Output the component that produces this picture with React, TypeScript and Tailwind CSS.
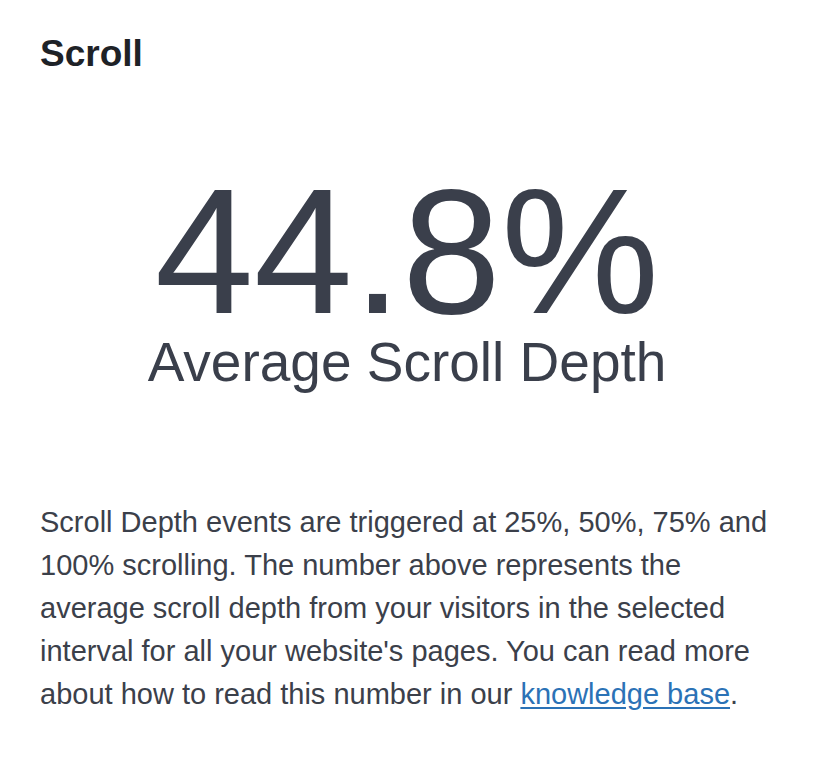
export default function App() {
  return (
    <div className="min-h-screen bg-white font-['Liberation_Sans',Arial,sans-serif]">
      <div className="px-10 pt-[34px]">
        {/* Header */}
        <h2 className="text-[37px] leading-[40px] font-bold text-[#1e2227]">Scroll</h2>

        {/* Metric */}
        <div className="flex flex-col items-center mt-[95px] text-[#3a3f4b]">
          <span className="text-[178px] leading-[166px]">44.8%</span>
          <span className="text-[55px] leading-[55px]">Average Scroll Depth</span>
        </div>

        {/* Description */}
        <p className="mt-[111px] text-[29px] leading-[43px] text-[#3b404a]">
          Scroll Depth events are triggered at 25%, 50%, 75% and 100% scrolling. The number above
          represents the average scroll depth from your visitors in the selected interval for all
          your website's pages. You can read more about how to read this number in our{" "}
          <a href="#" className="text-[#2b72b6] underline underline-offset-[3px]">
            knowledge base
          </a>
          .
        </p>
      </div>
    </div>
  );
}
